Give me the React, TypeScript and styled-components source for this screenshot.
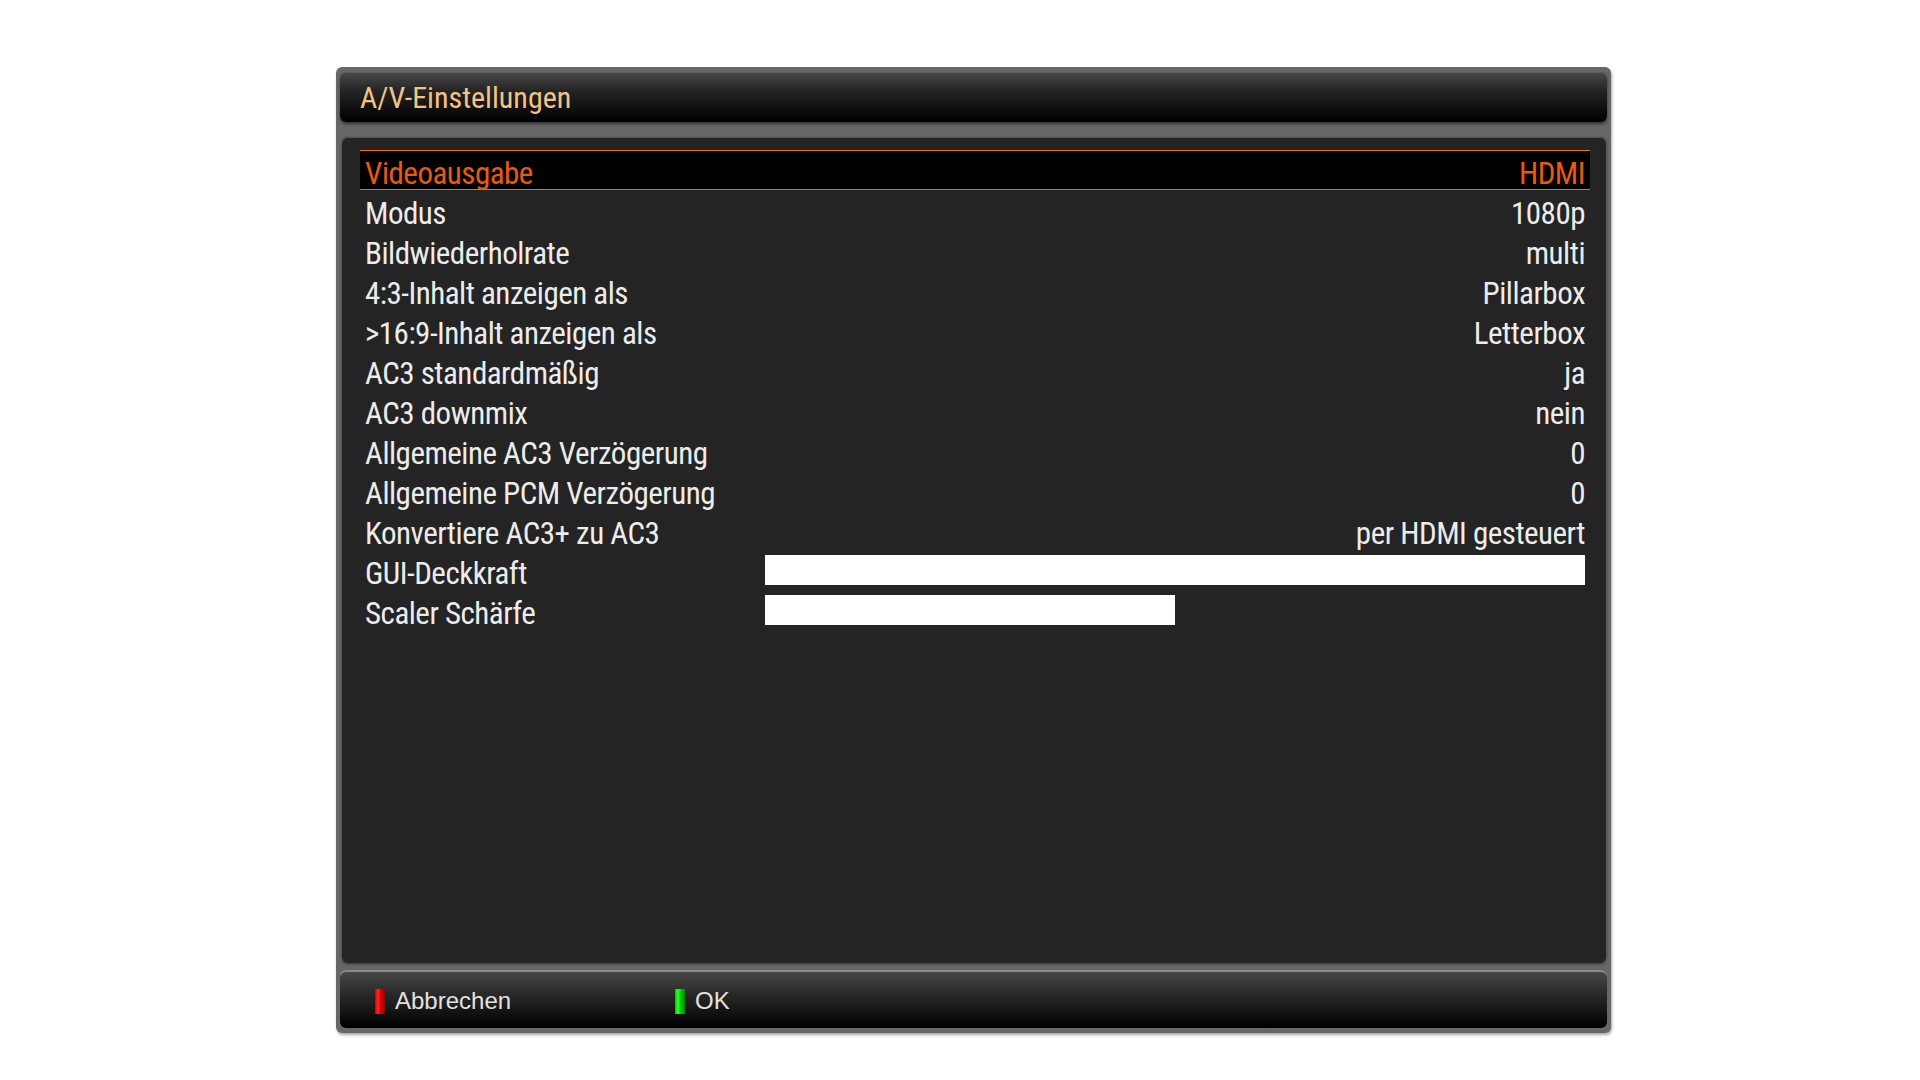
import React from "react";
import styled, { createGlobalStyle } from "styled-components";

const Global = createGlobalStyle`
  html, body { margin: 0; padding: 0; background: #ffffff; }
  body { width: 1920px; height: 1080px; overflow: hidden; }
`;

const Page = styled.div`
  width: 1920px;
  height: 1080px;
  padding-top: 67px;
  box-sizing: border-box;
  display: flex;
  justify-content: flex-start;
  padding-left: 336px;
`;

const Frame = styled.div`
  width: 1275px;
  height: 966px;
  box-sizing: border-box;
  background: #676767;
  border-radius: 6px;
  padding: 5px 4px 5px 4px;
  display: flex;
  flex-direction: column;
  box-shadow: 1px 2px 3px rgba(0, 0, 0, 0.35);
`;

const TitleBar = styled.div`
  height: 50px;
  flex: none;
  border-radius: 6px;
  background: linear-gradient(#4a4a4a 0%, #262626 35%, #000000 100%);
  box-shadow: 0 2px 3px rgba(0, 0, 0, 0.5), inset 0 1px 0 #5a5a5a;
  display: flex;
  align-items: center;
  padding-left: 20px;
`;

const Condensed = styled.span`
  font-family: Roboto, "Noto Sans", sans-serif;
  font-stretch: condensed;
  display: inline-block;
`;

const TitleText = styled(Condensed)`
  color: #f3c384;
  font-size: 30px;
  line-height: 1;
  padding-top: 2px;
`;

const Content = styled.div`
  margin-top: 15px;
  margin-left: 2px;
  margin-right: 1px;
  height: 826px;
  flex: none;
  background: #242424;
  border-radius: 6px;
  box-shadow: inset 0 1px 0 #555, 0 1px 3px rgba(0, 0, 0, 0.5);
  padding: 13px 16px 13px 18px;
  box-sizing: border-box;
  display: flex;
  flex-direction: column;
`;

const Row = styled.div<{ $selected?: boolean }>`
  height: 40px;
  box-sizing: border-box;
  display: flex;
  align-items: center;
  justify-content: space-between;
  padding: 0 5px;
  background: ${(p) => (p.$selected ? "#000000" : "transparent")};
  border-top: ${(p) => (p.$selected ? "1px solid #f07000" : "none")};
  border-bottom: ${(p) => (p.$selected ? "1px solid #f07000" : "none")};
  color: ${(p) => (p.$selected ? "#ea5a0c" : "#ececec")};
`;

const RowText = styled(Condensed)`
  font-size: 31px;
  letter-spacing: -0.5px;
  line-height: 33px;
  padding-top: 7px;
  white-space: nowrap;
`;

const Label = styled(RowText)``;

const Value = styled(RowText)``;

const SliderTrack = styled.div`
  width: 820px;
  height: 30px;
  display: flex;
`;

const SliderFill = styled.div`
  height: 100%;
  background: #ffffff;
`;

const Footer = styled.div`
  margin-top: 7px;
  height: 58px;
  flex: none;
  border-radius: 6px;
  background: linear-gradient(#4a4a4a 0%, #2a2a2a 40%, #000000 100%);
  box-shadow: inset 0 2px 0 #8a8a8a;
  display: flex;
  align-items: center;
  padding-left: 35px;
  padding-top: 3px;
  box-sizing: border-box;
`;

const KeyItem = styled.div`
  width: 300px;
  display: flex;
  align-items: center;
  gap: 10px;
`;

const KeyBar = styled.div<{ $color: "red" | "green" }>`
  width: 10px;
  height: 25px;
  margin-top: 2px;
  background: ${(p) =>
    p.$color === "red"
      ? "linear-gradient(90deg, #c00000 0%, #ff2a2a 30%, #e00000 55%, #900000 100%)"
      : "linear-gradient(90deg, #00c000 0%, #33ff33 30%, #00d000 55%, #008800 100%)"};
`;

const KeyLabel = styled.span`
  font-family: "Liberation Sans", Arial, sans-serif;
  font-size: 24px;
  color: #e2e2e2;
`;

type Item =
  | { label: string; value: string }
  | { label: string; slider: number };

const items: Item[] = [
  { label: "Videoausgabe", value: "HDMI" },
  { label: "Modus", value: "1080p" },
  { label: "Bildwiederholrate", value: "multi" },
  { label: "4:3-Inhalt anzeigen als", value: "Pillarbox" },
  { label: ">16:9-Inhalt anzeigen als", value: "Letterbox" },
  { label: "AC3 standardmäßig", value: "ja" },
  { label: "AC3 downmix", value: "nein" },
  { label: "Allgemeine AC3 Verzögerung", value: "0" },
  { label: "Allgemeine PCM Verzögerung", value: "0" },
  { label: "Konvertiere AC3+ zu AC3", value: "per HDMI gesteuert" },
  { label: "GUI-Deckkraft", slider: 100 },
  { label: "Scaler Schärfe", slider: 50 },
];

export default function App() {
  return (
    <>
      <Global />
      <Page>
        <Frame>
          <TitleBar>
            <TitleText>A/V-Einstellungen</TitleText>
          </TitleBar>
          <Content>
            {items.map((it, i) => (
              <Row key={it.label} $selected={i === 0}>
                <Label>{it.label}</Label>
                {"value" in it ? (
                  <Value>{it.value}</Value>
                ) : (
                  <SliderTrack>
                    <SliderFill style={{ width: `${it.slider}%` }} />
                  </SliderTrack>
                )}
              </Row>
            ))}
          </Content>
          <Footer>
            <KeyItem>
              <KeyBar $color="red" />
              <KeyLabel>Abbrechen</KeyLabel>
            </KeyItem>
            <KeyItem>
              <KeyBar $color="green" />
              <KeyLabel>OK</KeyLabel>
            </KeyItem>
          </Footer>
        </Frame>
      </Page>
    </>
  );
}
